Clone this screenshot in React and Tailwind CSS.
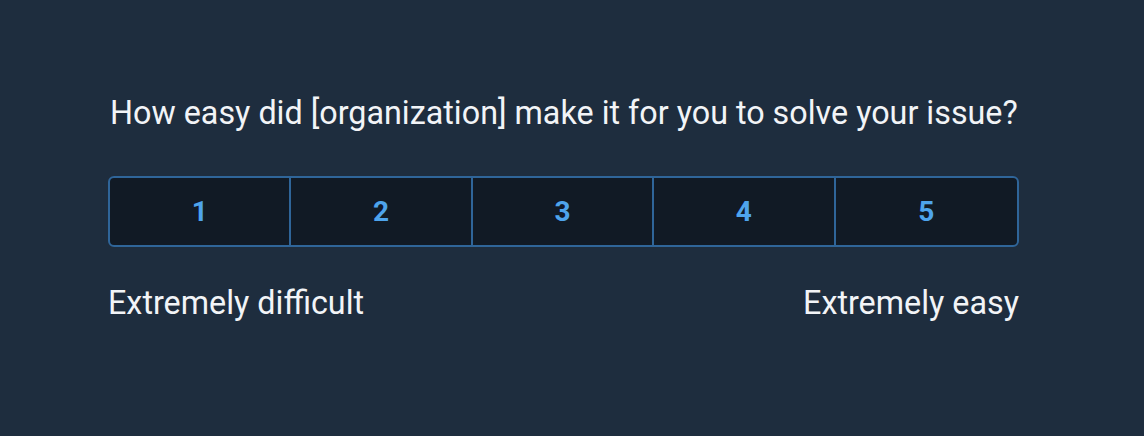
export default function App() {
  const options = [1, 2, 3, 4, 5];
  return (
    <div className="w-[1144px] h-[436px] bg-[#1e2d3e] font-['Roboto',sans-serif] text-[#f2f4f7] pl-[108px] pt-[95px]">
      <h1 className="text-[32.3px] leading-9 font-normal pl-[2px]">
        How easy did [organization] make it for you to solve your issue?
      </h1>
      <div className="mt-[45px] w-[911px] h-[71px] grid grid-cols-5 border-2 border-[#2f6599] rounded-[6px] overflow-hidden bg-[#111a25]">
        {options.map((n, i) => (
          <button
            key={n}
            className={`flex items-center justify-center text-[28px] font-bold text-[#4ea4ec] ${i < 4 ? "border-r-2 border-[#2f6599]" : ""}`}
          >
            {n}
          </button>
        ))}
      </div>
      <div className="mt-[38px] w-[911px] flex justify-between text-[32.3px] leading-9">
        <span>Extremely difficult</span>
        <span>Extremely easy</span>
      </div>
    </div>
  );
}
